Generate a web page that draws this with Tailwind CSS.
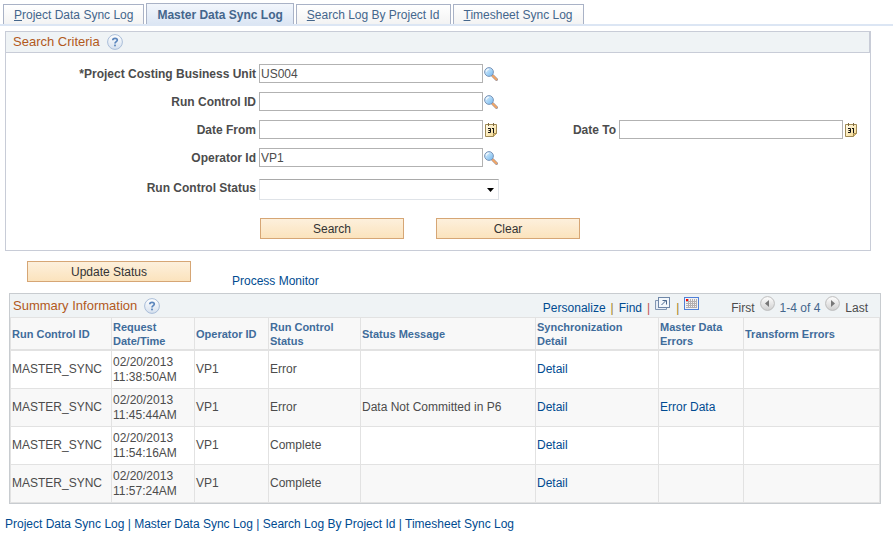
<!DOCTYPE html>
<html lang="en">
<head>
    <meta charset="UTF-8">
    <meta name="viewport" content="width=device-width, initial-scale=1.0">
    <title>Master Data Sync Log</title>
    <script src="https://cdn.jsdelivr.net/npm/@tailwindcss/browser@4"></script>
</head>
<body class="bg-white font-['Liberation_Sans',Arial,sans-serif] text-xs text-[#4c4c4c]">

    <!-- Shared icons -->
    <svg class="absolute size-0" aria-hidden="true">
        <defs>
            <linearGradient id="lensFill" x1="0" y1="0" x2="1" y2="1">
                <stop offset="0" stop-color="#e8f6ff" />
                <stop offset="1" stop-color="#6db5ee" />
            </linearGradient>
            <linearGradient id="helpFill" x1="0" y1="0" x2="0" y2="1">
                <stop offset="0" stop-color="#ffffff" />
                <stop offset="1" stop-color="#d5e0ee" />
            </linearGradient>
            <linearGradient id="ballFill" x1="0" y1="0" x2="0" y2="1">
                <stop offset="0" stop-color="#ffffff" />
                <stop offset="1" stop-color="#cfcfcf" />
            </linearGradient>
            <linearGradient id="noteFill" x1="0" y1="0" x2="1" y2="1">
                <stop offset="0" stop-color="#fffdf0" />
                <stop offset="1" stop-color="#f7d888" />
            </linearGradient>
        </defs>
        <symbol id="lookup" viewBox="0 0 14 14">
            <path d="M8.5 8.5L12.5 12.5" stroke="#9a94a0" stroke-width="3" stroke-linecap="round" />
            <path d="M9 9L12.4 12.4" stroke="#f3a765" stroke-width="2" stroke-linecap="round" />
            <circle cx="5" cy="5" r="4.4" fill="url(#lensFill)" stroke="#7d96b8" stroke-width="1" />
            <path d="M2.4 4.6A2.6 2.6 0 0 1 4.8 2.2" stroke="#ffffff" fill="none" />
        </symbol>
        <symbol id="calendar" viewBox="0 0 12 14">
            <path d="M.5 1.5H11.5V10.5L8.5 13.5H.5Z" fill="url(#noteFill)" stroke="#a08a55" />
            <path d="M8.5 13.5V10.5H11.5" fill="#e8c36c" stroke="#a08a55" />
            <path d="M3.5 0V3M8.5 0V3" stroke="#7d6a42" />
            <path d="M3 5.5H5.5V9.5H3M3.5 7.5H5.5M7 5.5H8.5M8.5 5V10" fill="none" stroke="#111" />
        </symbol>
        <symbol id="help" viewBox="0 0 16 16">
            <circle cx="8" cy="8" r="7.4" fill="url(#helpFill)" stroke="#a9bdd9" />
            <path d="M5.8 6.3C5.8 3.6 10.3 3.7 10.3 6.1C10.3 7.7 8 7.7 8 9.6" fill="none" stroke="#5b86bd" stroke-width="1.7" />
            <rect x="7.1" y="10.6" width="1.8" height="1.7" fill="#5b86bd" />
        </symbol>
        <symbol id="popup" viewBox="0 0 16 13">
            <path d="M3.5 3.5H.5V12.5H11.5V10.5" fill="#e6edf6" stroke="#8196b3" />
            <rect x="3.5" y=".5" width="11" height="10" fill="#f4f8fc" stroke="#6f87a8" />
            <path d="M6.5 8L11 3.5M7.5 3.5H11.5V7.5" fill="none" stroke="#4c698f" />
        </symbol>
        <symbol id="sheet" viewBox="0 0 15 13">
            <rect x=".5" y=".5" width="14" height="12" fill="#f2f2f4" stroke="#4f80d8" />
            <path d="M2 4.5H13M2 6.5H13M2 8.5H13M2 10.5H13M4.5 2V11M6.5 2V11M8.5 2V11M10.5 2V11M12.5 2V11" stroke="#b3aeb0" />
            <rect x="2" y="2" width="2" height="2" fill="#ff0000" />
        </symbol>
        <symbol id="prev" viewBox="0 0 15 15">
            <circle cx="7.5" cy="7.5" r="6.9" fill="url(#ballFill)" stroke="#bcbcbc" />
            <path d="M9 4V11L5 7.5Z" fill="#777" />
        </symbol>
        <symbol id="next" viewBox="0 0 15 15">
            <circle cx="7.5" cy="7.5" r="6.9" fill="url(#ballFill)" stroke="#bcbcbc" />
            <path d="M6 4V11L10 7.5Z" fill="#777" />
        </symbol>
    </svg>

    <!-- Tabs -->
    <nav class="flex items-end gap-[2px] border-b-2 border-[#dce6f4] pt-[3px] pl-[3px] text-[#44668c]">
        <a href="#" class="h-5 border border-b-0 border-[#a9b2c6] bg-linear-to-b from-white to-[#f3f3f3] px-[10px] leading-5"><u>P</u>roject Data Sync Log</a>
        <a href="#" class="h-[21px] border border-b-0 border-[#a9b2c6] bg-linear-to-b from-[#f2f6fc] to-[#dce6f4] px-[10px] font-bold leading-[22px]">Master Data Sync Log</a>
        <a href="#" class="h-5 border border-b-0 border-[#a9b2c6] bg-linear-to-b from-white to-[#f3f3f3] px-[10px] leading-5"><u>S</u>earch Log By Project Id</a>
        <a href="#" class="h-5 border border-b-0 border-[#a9b2c6] bg-linear-to-b from-white to-[#f3f3f3] px-[10px] leading-5"><u>T</u>imesheet Sync Log</a>
    </nav>

    <!-- Search Criteria -->
    <form class="mt-[5px] mr-[22px] ml-[5px] border border-[#c8ccd7] pb-[11px]">
        <div class="flex h-[21px] items-center gap-[7px] border-r border-b border-[#c8ccd7] bg-[#eff3f5] pl-[7px]">
            <h2 class="text-[13px] text-[#b2591c]">Search Criteria</h2>
            <button type="button" aria-label="Help"><svg class="size-4"><use href="#help" /></svg></button>
        </div>

        <div class="mt-[11px] grid grid-cols-[250px_240px_120px_1fr] items-center gap-x-[3px] gap-y-[9px]">
            <label for="businessUnit" class="text-right font-bold">*Project Costing Business Unit</label>
            <div class="flex items-center gap-px">
                <input id="businessUnit" type="text" value="US004" class="h-[19px] w-56 border border-[#b2b2b2] px-px">
                <button type="button" aria-label="Look up business unit"><svg class="size-[14px]"><use href="#lookup" /></svg></button>
            </div>

            <label for="runControlId" class="col-start-1 text-right font-bold">Run Control ID</label>
            <div class="flex items-center gap-px">
                <input id="runControlId" type="text" class="h-[19px] w-56 border border-[#b2b2b2] px-px">
                <button type="button" aria-label="Look up run control"><svg class="size-[14px]"><use href="#lookup" /></svg></button>
            </div>

            <label for="dateFrom" class="col-start-1 text-right font-bold">Date From</label>
            <div class="flex items-center gap-[2px]">
                <input id="dateFrom" type="text" class="h-[19px] w-56 border border-[#b2b2b2] px-px">
                <button type="button" aria-label="Pick date from"><svg class="h-[14px] w-3"><use href="#calendar" /></svg></button>
            </div>
            <label for="dateTo" class="pr-[6px] text-right font-bold">Date To</label>
            <div class="-ml-[6px] flex items-center gap-[2px]">
                <input id="dateTo" type="text" class="h-[19px] w-56 border border-[#b2b2b2] px-px">
                <button type="button" aria-label="Pick date to"><svg class="h-[14px] w-3"><use href="#calendar" /></svg></button>
            </div>

            <label for="operatorId" class="col-start-1 text-right font-bold">Operator Id</label>
            <div class="flex items-center gap-px">
                <input id="operatorId" type="text" value="VP1" class="h-[19px] w-56 border border-[#b2b2b2] px-px">
                <button type="button" aria-label="Look up operator"><svg class="size-[14px]"><use href="#lookup" /></svg></button>
            </div>

            <label for="runStatus" class="col-start-1 text-right font-bold">Run Control Status</label>
            <div class="grid items-center pt-[3px]">
                <select id="runStatus" class="col-start-1 row-start-1 h-[21px] w-full appearance-none border border-[#dfe3e8] border-t-[#a9a9a9] bg-white px-1">
                    <option></option>
                    <option>Error</option>
                    <option>Complete</option>
                </select>
                <svg class="pointer-events-none col-start-1 row-start-1 mr-[5px] h-1 w-[7px] justify-self-end" viewBox="0 0 7 4"><path d="M0 0H7L3.5 4Z" fill="#000" /></svg>
            </div>
        </div>

        <div class="mt-[18px] flex gap-8 pl-[254px]">
            <button type="submit" class="h-[21px] w-36 border border-[#d6a675] bg-linear-to-b from-[#fdf0dc] to-[#fbe3bd] text-[#333]">Search</button>
            <button type="reset" class="h-[21px] w-36 border border-[#d6a675] bg-linear-to-b from-[#fdf0dc] to-[#fbe3bd] text-[#333]">Clear</button>
        </div>
    </form>

    <div class="mt-[10px] flex items-start pl-[27px]">
        <button type="button" class="h-[21px] w-[164px] border border-[#d6a675] bg-linear-to-b from-[#fdf0dc] to-[#fbe3bd] text-[#333]">Update Status</button>
        <a href="#" class="mt-3 ml-[41px] pb-1 leading-4 text-[#004b91]">Process Monitor</a>
    </div>

    <!-- Summary Information -->
    <section class="mr-3 ml-[9px] border border-[#c8ccd0]">
        <div class="flex h-[23px] items-center bg-[#eff3f5] pr-3 pl-[3px]">
            <h2 class="text-[13px] text-[#b2591c]">Summary Information</h2>
            <button type="button" aria-label="Help" class="ml-[7px]"><svg class="size-4"><use href="#help" /></svg></button>
            <div class="ml-auto flex items-start gap-[5px]">
                <a href="#" class="pt-1 text-[#004b91]">Personalize</a>
                <span class="pt-1 text-[#a08020]">|</span>
                <a href="#" class="pt-1 text-[#004b91]">Find</a>
                <span class="pt-1 text-[#c05050]">|</span>
                <button type="button" aria-label="View all" class="pt-px"><svg class="h-[13px] w-4"><use href="#popup" /></svg></button>
                <span class="pt-1 text-[#a08020]">|</span>
                <button type="button" aria-label="Download" class="pt-px"><svg class="h-[13px] w-[15px]"><use href="#sheet" /></svg></button>
            </div>
            <div class="ml-8 flex items-start gap-[5px]">
                <span class="pt-1">First</span>
                <button type="button" aria-label="Previous rows"><svg class="size-[15px]"><use href="#prev" /></svg></button>
                <span class="pt-1 text-[#44668c]">1-4 of 4</span>
                <button type="button" aria-label="Next rows"><svg class="size-[15px]"><use href="#next" /></svg></button>
                <span class="pt-1">Last</span>
            </div>
        </div>

        <table class="w-full table-fixed border-separate border-spacing-0 border-l border-[#e2e2e2] [&_td]:h-[38px] [&_td]:border-r [&_td]:border-b [&_td]:border-[#e2e2e2] [&_td]:px-px [&_td]:leading-[15px] [&_th]:h-[34px] [&_th]:border-t [&_th]:border-r [&_th]:border-b-2 [&_th]:border-[#e2e2e2] [&_th]:px-px [&_th]:text-left [&_th]:text-[11px] [&_th]:leading-[14px]">
            <colgroup>
                <col class="w-[101px]">
                <col class="w-[83px]">
                <col class="w-[74px]">
                <col class="w-[92px]">
                <col class="w-[175px]">
                <col class="w-[123px]">
                <col class="w-[85px]">
                <col>
            </colgroup>
            <thead class="bg-[#f8f8f8] text-[#3f6c9b]">
                <tr>
                    <th>Run Control ID</th>
                    <th>Request<br>Date/Time</th>
                    <th>Operator ID</th>
                    <th>Run Control<br>Status</th>
                    <th>Status Message</th>
                    <th>Synchronization<br>Detail</th>
                    <th>Master Data<br>Errors</th>
                    <th>Transform Errors</th>
                </tr>
            </thead>
            <tbody>
                <tr>
                    <td>MASTER_SYNC</td>
                    <td>02/20/2013<br>11:38:50AM</td>
                    <td>VP1</td>
                    <td>Error</td>
                    <td></td>
                    <td><a href="#" class="text-[#004b91]">Detail</a></td>
                    <td></td>
                    <td></td>
                </tr>
                <tr class="bg-[#f8f8f8]">
                    <td>MASTER_SYNC</td>
                    <td>02/20/2013<br>11:45:44AM</td>
                    <td>VP1</td>
                    <td>Error</td>
                    <td>Data Not Committed in P6</td>
                    <td><a href="#" class="text-[#004b91]">Detail</a></td>
                    <td><a href="#" class="text-[#004b91]">Error Data</a></td>
                    <td></td>
                </tr>
                <tr>
                    <td>MASTER_SYNC</td>
                    <td>02/20/2013<br>11:54:16AM</td>
                    <td>VP1</td>
                    <td>Complete</td>
                    <td></td>
                    <td><a href="#" class="text-[#004b91]">Detail</a></td>
                    <td></td>
                    <td></td>
                </tr>
                <tr class="bg-[#f8f8f8]">
                    <td>MASTER_SYNC</td>
                    <td>02/20/2013<br>11:57:24AM</td>
                    <td>VP1</td>
                    <td>Complete</td>
                    <td></td>
                    <td><a href="#" class="text-[#004b91]">Detail</a></td>
                    <td></td>
                    <td></td>
                </tr>
            </tbody>
        </table>
    </section>

    <!-- Footer links -->
    <footer class="mt-3 pl-[5px] text-[#004b91]">
        <a href="#">Project Data Sync Log</a> | <a href="#">Master Data Sync Log</a> | <a href="#">Search Log By Project Id</a> | <a href="#">Timesheet Sync Log</a>
    </footer>
</body>
</html>
